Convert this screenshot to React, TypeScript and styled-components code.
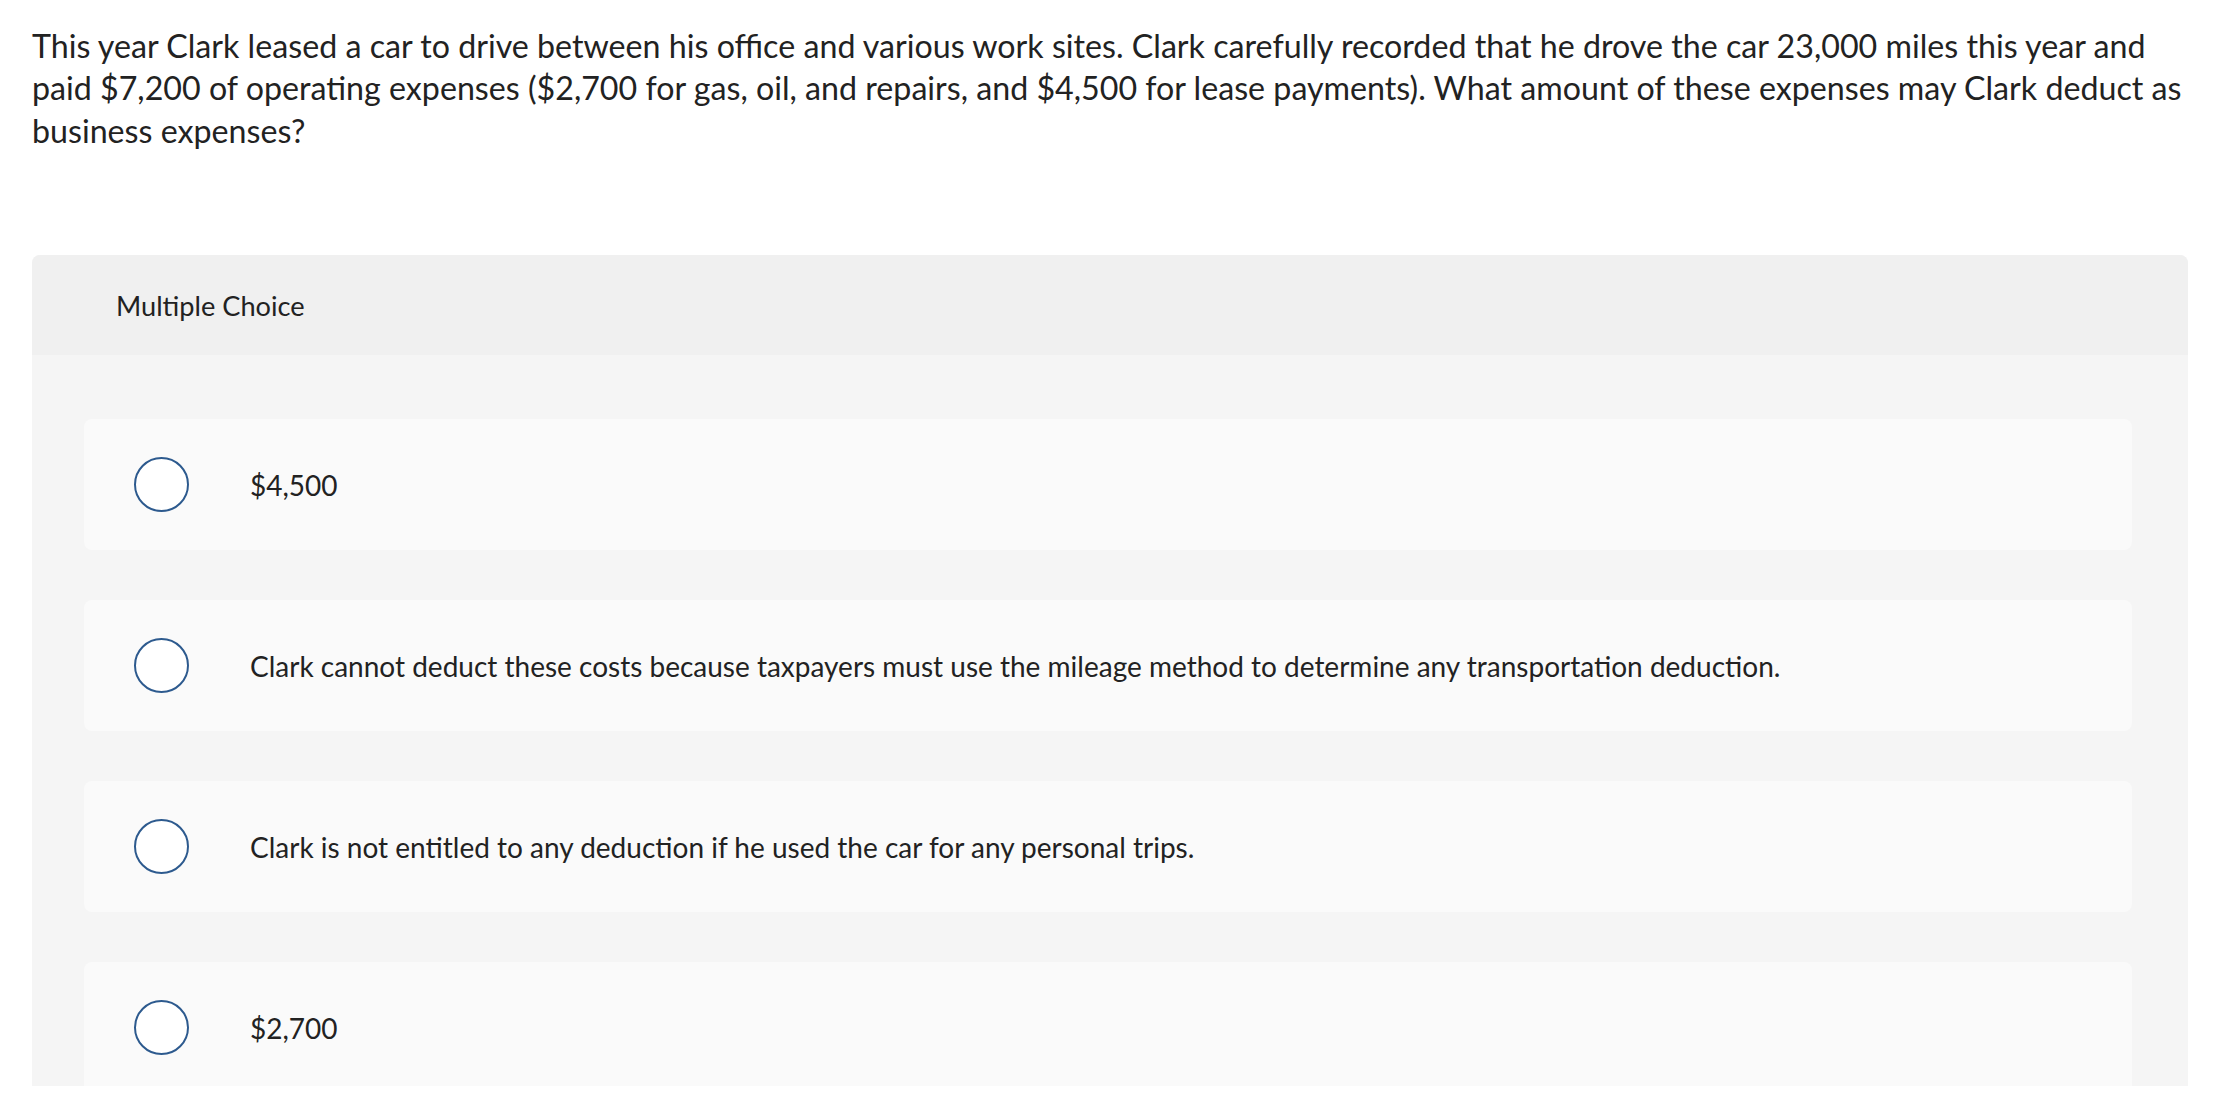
import React from "react";
import styled, { createGlobalStyle } from "styled-components";

const GlobalStyle = createGlobalStyle`
  html, body {
    margin: 0;
    padding: 0;
    background: #ffffff;
  }
  body {
    font-family: Lato, "Liberation Sans", sans-serif;
    color: #222222;
  }
`;

const choices = [
  "$4,500",
  "Clark cannot deduct these costs because taxpayers must use the mileage method to determine any transportation deduction.",
  "Clark is not entitled to any deduction if he used the car for any personal trips.",
  "$2,700",
];

const App = () => {
  return (
    <>
      <GlobalStyle />
      <Page>
        <Question>
          This year Clark leased a car to drive between his office and various
          work sites. Clark carefully recorded that he drove the car 23,000
          miles this year and paid $7,200 of operating expenses ($2,700 for gas,
          oil, and repairs, and $4,500 for lease payments). What amount of these
          expenses may Clark deduct as business expenses?
        </Question>
        <Card>
          <CardHeader>Multiple Choice</CardHeader>
          <CardBody>
            {choices.map((c) => (
              <ChoiceRow key={c}>
                <Radio />
                <ChoiceText>{c}</ChoiceText>
              </ChoiceRow>
            ))}
          </CardBody>
        </Card>
      </Page>
    </>
  );
};

export default App;

const Page = styled.div`
  height: 1086px;
  overflow: hidden;
  padding: 25px 28px 0 32px;
  box-sizing: border-box;
`;

const Question = styled.div`
  margin-right: -18px;
  font-size: 32.2px;
  line-height: 42.4px;
  color: #222222;
`;

const Card = styled.div`
  margin-top: 103px;
  border-radius: 8px 8px 0 0;
  overflow: hidden;
  background: #f5f5f5;
`;

const CardHeader = styled.div`
  height: 100px;
  display: flex;
  align-items: center;
  padding-left: 84px;
  background: #f0f0f0;
  font-size: 27.2px;
  color: #222222;
`;

const CardBody = styled.div`
  display: flex;
  flex-direction: column;
  gap: 50px;
  padding: 64px 56px 0 52px;
`;

const ChoiceRow = styled.div`
  height: 131px;
  display: flex;
  align-items: center;
  padding-left: 50px;
  background: #fafafa;
  border-radius: 8px;
`;

const Radio = styled.span`
  flex: none;
  width: 51px;
  height: 51px;
  border: 2px solid #2d5a8e;
  border-radius: 50%;
  background: #ffffff;
`;

const ChoiceText = styled.div`
  margin-left: 61px;
  font-size: 28px;
  color: #222222;
`;
